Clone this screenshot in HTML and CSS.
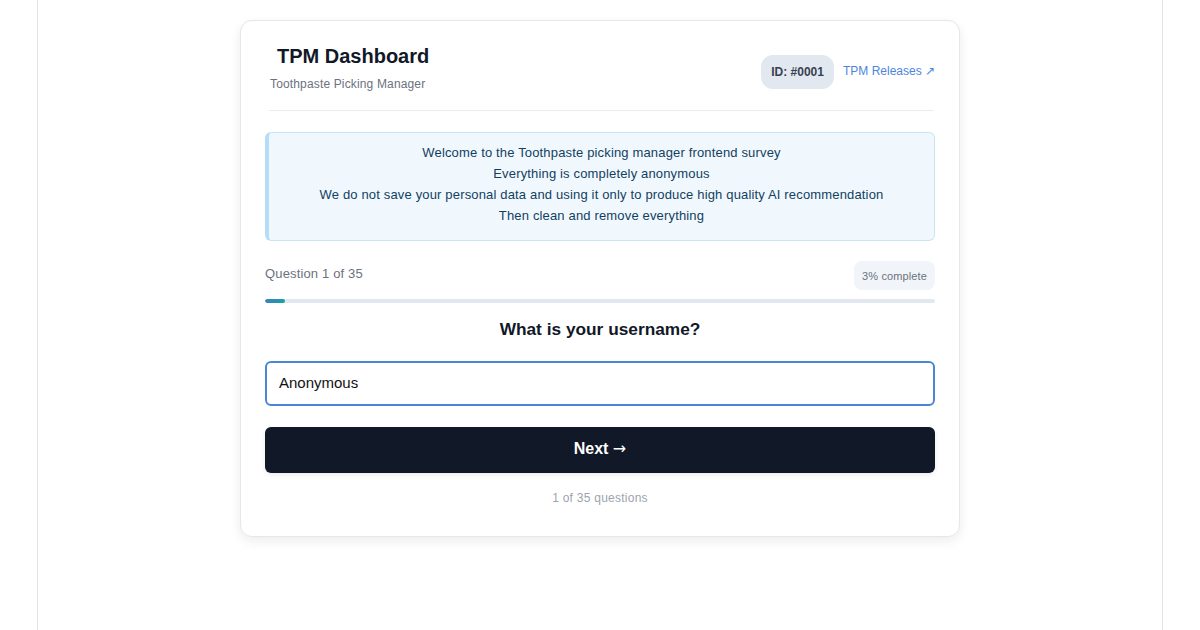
FILE: index.html
```html
<!DOCTYPE html>
<html lang="en">
<head>
<meta charset="utf-8">
<title>TPM Dashboard</title>
<link rel="stylesheet" href="styles.css">
</head>
<body>
<div class="page">
  <main class="card">
    <header class="card-header">
      <div class="brand">
        <h1 class="brand-title">TPM Dashboard</h1>
        <div class="brand-sub">Toothpaste Picking Manager</div>
      </div>
      <div class="header-meta">
        <span class="id-badge">ID: #0001</span>
        <a class="releases-link" href="#">TPM Releases <span class="arrow-ext">↗</span></a>
      </div>
    </header>

    <section class="notice">
      <p>Welcome to the Toothpaste picking manager frontend survey</p>
      <p>Everything is completely anonymous</p>
      <p>We do not save your personal data and using it only to produce high quality AI recommendation</p>
      <p>Then clean and remove everything</p>
    </section>

    <div class="progress-row">
      <span class="progress-label">Question 1 of 35</span>
      <span class="progress-pill">3% complete</span>
    </div>
    <div class="progress-track"><div class="progress-fill" style="width: 3%"></div></div>

    <h2 class="question">What is your username?</h2>
    <input class="answer" type="text" value="Anonymous">
    <button class="next-btn" type="button">Next <span class="arrow">→</span></button>

    <div class="footer-count">1 of 35 questions</div>
  </main>
</div>
</body>
</html>
```

FILE: styles.css
```css
* { box-sizing: border-box; }

html, body {
  margin: 0;
  padding: 0;
  background: #ffffff;
  font-family: "Liberation Sans", Arial, sans-serif;
}

.page {
  width: 1126px;
  min-height: 630px;
  margin: 0 auto;
  padding-top: 20px;
  border-left: 1px solid #e3e3e3;
  border-right: 1px solid #e3e3e3;
}

.card {
  width: 720px;
  margin: 0 auto;
  padding: 24px 24px 30px;
  background: #ffffff;
  border: 1px solid #e5e7eb;
  border-radius: 12px;
  box-shadow: 0 4px 12px rgba(15, 23, 42, 0.08);
}

/* header */
.card-header {
  display: flex;
  justify-content: space-between;
  align-items: flex-end;
  margin: 0 1px 0 4px;
  padding-bottom: 19px;
  border-bottom: 1px solid #e9ecf0;
}

.brand-title {
  margin: 0;
  padding-left: 8px;
  font-size: 20px;
  line-height: 22px;
  font-weight: 700;
  color: #111827;
}

.brand-sub {
  margin-top: 10px;
  padding-left: 1px;
  font-size: 12px;
  line-height: 14px;
  color: #6b7280;
  letter-spacing: 0.15px;
}

.header-meta {
  display: flex;
  align-items: center;
  gap: 9px;
  margin-bottom: 2px;
}

.id-badge {
  display: inline-flex;
  align-items: center;
  height: 34px;
  padding: 0 10px;
  border-radius: 12px;
  background: #e2e8f0;
  color: #374151;
  font-size: 12px;
  font-weight: 700;
}

.releases-link {
  color: #4a86e0;
  font-size: 12px;
  text-decoration: none;
  margin-right: -1px;
  margin-bottom: 2px;
}

/* notice */
.notice {
  margin-top: 21px;
  padding: 9px 16px 14px;
  background: #f0f8fe;
  border: 1px solid #c8e5f7;
  border-left: 4px solid #b5ddf8;
  border-radius: 6px;
  text-align: center;
  color: #12415f;
  font-size: 13px;
  line-height: 21px;
  letter-spacing: 0.16px;
}

.notice p { margin: 0; }

/* progress */
.progress-row {
  display: flex;
  justify-content: space-between;
  align-items: center;
  margin-top: 20px;
}

.progress-label {
  font-size: 13px;
  color: #6b7280;
  margin-top: -5px;
  letter-spacing: 0.15px;
}

.progress-pill {
  display: inline-flex;
  align-items: center;
  height: 29px;
  padding: 0 8px;
  border-radius: 8px;
  background: #f1f5f9;
  color: #6b7280;
  font-size: 11px;
  letter-spacing: 0.12px;
}

.progress-track {
  height: 4px;
  margin-top: 9px;
  background: #e2e8f0;
  border-radius: 2px;
  overflow: hidden;
}

.progress-fill {
  height: 100%;
  background: linear-gradient(90deg, #3b7fc4, #16a59a);
  border-radius: 2px;
}

/* question */
.question {
  margin: 15px 0 0;
  text-align: center;
  font-size: 17.3px;
  line-height: 22px;
  font-weight: 700;
  color: #111827;
}

.answer {
  display: block;
  width: 100%;
  height: 45px;
  margin-top: 21px;
  padding: 0 12px 3px;
  border: 2px solid #4a86d6;
  border-radius: 6px;
  font-family: inherit;
  font-size: 15px;
  color: #111111;
  background: #ffffff;
  outline: none;
}

.next-btn {
  display: block;
  width: 100%;
  height: 46px;
  margin-top: 21px;
  padding: 0 0 3px;
  border: none;
  border-radius: 6px;
  background: #111827;
  color: #ffffff;
  font-family: inherit;
  font-size: 16px;
  font-weight: 700;
  box-shadow: 0 2px 4px rgba(17, 24, 39, 0.08);
}

.arrow {
  font-family: "DejaVu Sans", sans-serif;
  font-weight: 400;
}

.footer-count {
  margin-top: 17px;
  text-align: center;
  font-size: 12px;
  line-height: 16px;
  color: #9ca3af;
  letter-spacing: 0.25px;
}
```
